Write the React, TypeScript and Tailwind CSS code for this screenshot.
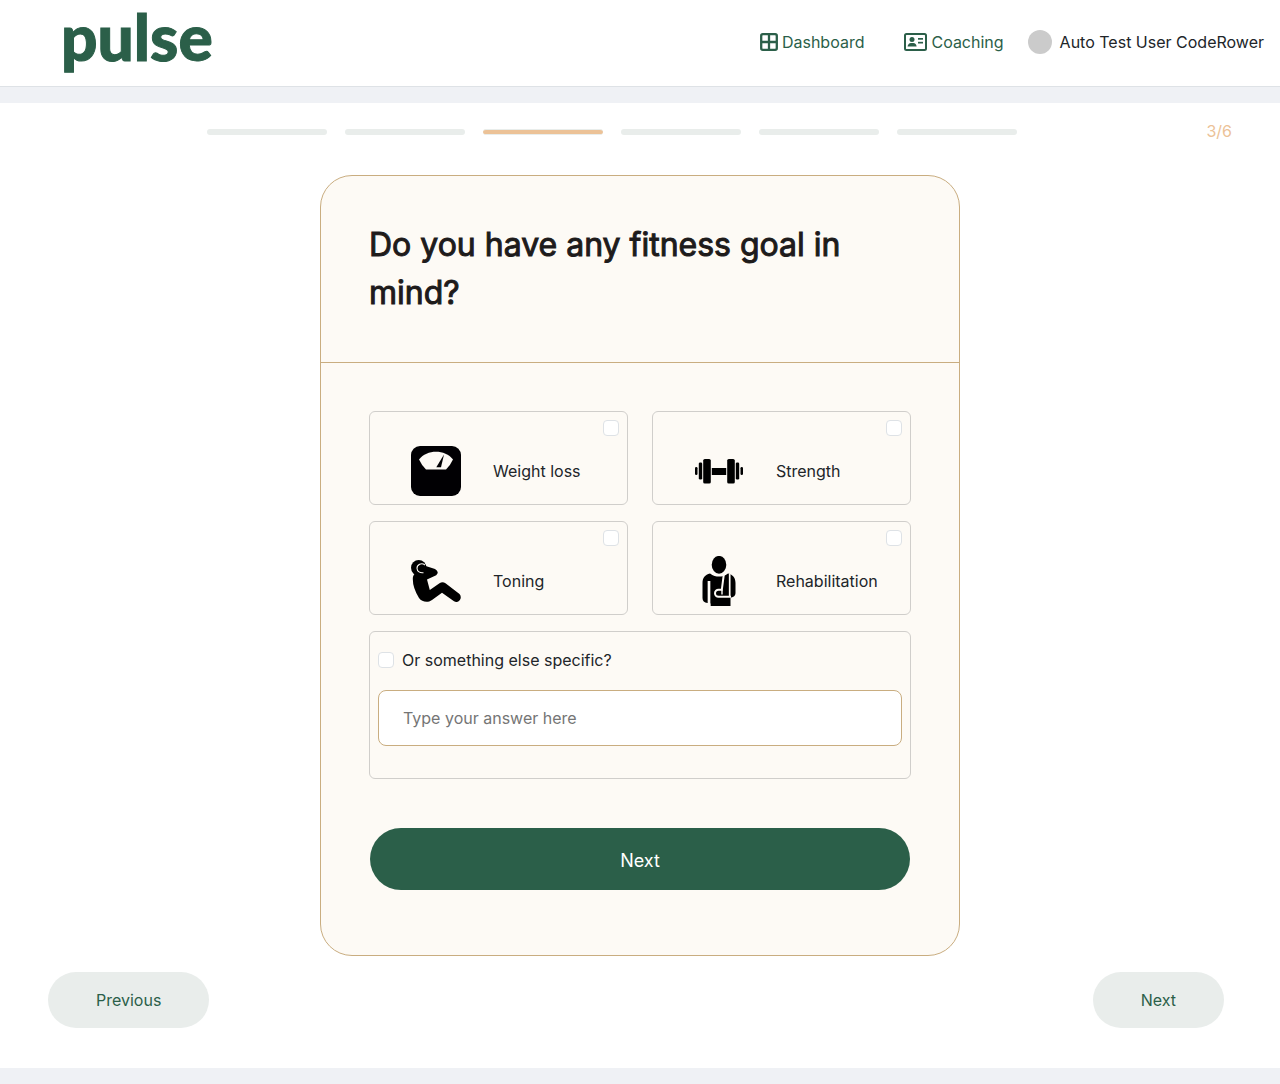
import { useState, type ReactNode } from "react";

const STEP_COUNT = 6;
const CURRENT_STEP = 3;

function DashboardIcon() {
  return (
    <svg viewBox="0 0 18 18" className="h-[18px] w-[18px]" fill="none" stroke="currentColor" strokeWidth="2.3" aria-hidden="true">
      <rect x="1.2" y="1.2" width="15.6" height="15.6" rx="1.6" />
      <path d="M9 1v16M1 9h16" />
    </svg>
  );
}

function CoachingIcon() {
  return (
    <svg viewBox="0 0 23 18" className="h-[18px] w-[23px]" fill="currentColor" aria-hidden="true">
      <rect x="1" y="1" width="21" height="16" rx="1.5" fill="none" stroke="currentColor" strokeWidth="2" />
      <circle cx="8" cy="6.6" r="2.5" />
      <path d="M3.6 13.6c0-2.2 1.8-3.7 3.2-3.7h2.6c1.6 0 3.2 1.5 3.2 3.7z" />
      <rect x="14" y="5" width="5" height="1.7" />
      <rect x="14" y="8.8" width="5" height="1.7" />
    </svg>
  );
}

function ScaleIcon() {
  return (
    <svg viewBox="0 0 50 50" className="size-[50px] shrink-0" aria-hidden="true">
      <rect width="50" height="50" rx="9" fill="#010003" />
      <path d="M8 13.5C16 3.2 34 3.2 42 13.5Q39.500 19 35 23.500H15Q10.500 19 8 13.500z" fill="#fdfaf5" />
      <path d="M33 8.500 25.300 21.200H30z" fill="#010003" />
    </svg>
  );
}

function DumbbellIcon() {
  return (
    <svg viewBox="0 0 50 50" className="size-[50px] shrink-0" fill="#000" aria-hidden="true">
      <rect x="1" y="21" width="2.500" height="8" rx="1.200" />
      <rect x="4.800" y="16.500" width="3.400" height="17" rx="1.300" />
      <rect x="9.200" y="13" width="7.600" height="24.500" rx="1.600" />
      <rect x="17.800" y="22" width="14.400" height="7" />
      <rect x="33.200" y="13" width="7.600" height="24.500" rx="1.600" />
      <rect x="41.800" y="16.500" width="3.400" height="17" rx="1.300" />
      <rect x="46.500" y="21" width="2.500" height="8" rx="1.200" />
    </svg>
  );
}

function SitUpIcon() {
  return (
    <svg viewBox="0 0 50 50" className="size-[50px] shrink-0" aria-hidden="true">
      <circle cx="7.700" cy="11.700" r="7.700" fill="#000" />
      <path
        d="M1.800 23C1.800 18 5 16 8 17L10 8.500L24 13Q28.800 16 25.200 19.300L16 23.500 18.800 34 28.500 27.200Q31.500 25.200 34.500 27.200L48.500 38C52 42 47.500 48 43 45.300L31 36.700 21 44C16.500 47.300 11 46 8 42Q1.800 32 1.800 23z"
        fill="#000"
      />
      <path d="M14 9C10.500 6.300 6 8.500 6 12.200C6.100 15.500 9 17.200 12.500 16.700" fill="none" stroke="#fdfaf5" strokeWidth="1.100" />
    </svg>
  );
}

function SlingIcon() {
  return (
    <svg viewBox="0 0 50 50" className="size-[50px] shrink-0" aria-hidden="true">
      <ellipse cx="25" cy="8.800" rx="7.300" ry="8.900" fill="#000" />
      <path
        d="M16 17.500C19 20 22 20.500 25 20.500S31 20 34 17.500C39 18.500 41.500 22 41.500 27V37C41.500 40 39 41.500 36.500 41.500V50H16.500V47.500L13.500 47Q8.500 46.500 8.500 42V27C8.500 22 11 18.500 16 17.500z"
        fill="#000"
      />
      <path d="M15 25V50" fill="none" stroke="#fdfaf5" strokeWidth="2.700" />
      <path d="M29.800 18.500 27.800 33.800H24.500a3.500 3.500 0 0 0 0 7H37" fill="none" stroke="#fdfaf5" strokeWidth="2" />
      <path d="M28 33.500V38.500" fill="none" stroke="#fdfaf5" strokeWidth="1.400" />
      <path d="M35.700 18V40" fill="none" stroke="#fdfaf5" strokeWidth="1.700" />
    </svg>
  );
}

const GOALS: { label: string; icon: ReactNode }[] = [
  { label: "Weight loss", icon: <ScaleIcon /> },
  { label: "Strength", icon: <DumbbellIcon /> },
  { label: "Toning", icon: <SitUpIcon /> },
  { label: "Rehabilitation", icon: <SlingIcon /> },
];

function Checkbox({ id }: { id: string }) {
  return (
    <input
      id={id}
      type="checkbox"
      className="size-4 shrink-0 appearance-none rounded-[4px] border border-[#dee2e6] bg-white checked:border-[#2b5f49] checked:bg-[#2b5f49]"
    />
  );
}

function GoalOption({ label, icon, id }: { label: string; icon: ReactNode; id: string }) {
  return (
    <label htmlFor={id} className="flex cursor-pointer flex-col gap-2.5 rounded-md border border-[#d0cecb] p-2">
      <span className="flex justify-end">
        <Checkbox id={id} />
      </span>
      <span className="flex items-center gap-8 pl-[33px]">
        {icon}
        {label}
      </span>
    </label>
  );
}

function Header() {
  return (
    <header className="flex h-[87px] items-center justify-between border-b border-[#dee2e6] bg-white pr-4 pl-[61px] text-[#2b5f49]">
      <a href="#home" className="pb-3 font-[Lato,sans-serif] text-[64px] leading-[72px] font-black [-webkit-text-stroke:1px_#2b5f49]">
        pulse
      </a>
      <nav className="flex items-center pb-0.5">
        <a href="#dashboard" className="flex items-center gap-1">
          <DashboardIcon />
          Dashboard
        </a>
        <a href="#coaching" className="ml-10 flex items-center gap-1">
          <CoachingIcon />
          Coaching
        </a>
        <a href="#profile" className="ml-6 flex items-center gap-2 text-[#212529]">
          <span className="size-6 rounded-full bg-[#cbcbcb]" />
          Auto Test User CodeRower
        </a>
      </nav>
    </header>
  );
}

function Progress() {
  return (
    <div className="flex items-center gap-[30px]">
      <ol className="flex flex-1 justify-center gap-[18px] pt-0.5">
        {Array.from({ length: STEP_COUNT }, (_, i) => (
          <li
            key={i}
            className={i + 1 === CURRENT_STEP ? "h-1.5 w-[120px] rounded-full border-y border-[#e9edeb] bg-[#ecc297]" : "h-1.5 w-[120px] rounded-full bg-[#e9edeb]"}
          />
        ))}
      </ol>
      <span className="text-[#ecc297]">
        {CURRENT_STEP}/{STEP_COUNT}
      </span>
    </div>
  );
}

export default function App() {
  const [answer, setAnswer] = useState("");

  return (
    <div className="min-h-screen bg-[#eff1f5] pb-4 font-[Inter,sans-serif] text-base text-[#212529]">
      <Header />
      <main className="mt-4 bg-white px-12 pt-4 pb-10">
        <Progress />
        <form className="mx-auto mt-8 max-w-[640px] rounded-[32px] border border-[#c9ad80] bg-[#fdfaf5]" onSubmit={(e) => e.preventDefault()}>
          <h1 className="border-b border-[#c9ad80] px-12 pt-[45px] pb-[45px] text-[32px] leading-[48px] font-normal text-[#1e1b1b] [-webkit-text-stroke:1px_#1e1b1b]">
            Do you have any fitness goal in mind?
          </h1>
          <div className="px-12 pt-12 pb-[65px]">
            <div className="grid grid-cols-2 gap-x-6 gap-y-4">
              {GOALS.map((goal, i) => (
                <GoalOption key={goal.label} id={`goal-${i}`} label={goal.label} icon={goal.icon} />
              ))}
              <div className="col-span-2 rounded-md border border-[#d0cecb] px-2 pt-4 pb-8">
                <label htmlFor="goal-other" className="flex items-center gap-2">
                  <Checkbox id="goal-other" />
                  Or something else specific?
                </label>
                <input
                  type="text"
                  aria-label="Your answer"
                  placeholder="Type your answer here"
                  value={answer}
                  onChange={(e) => setAnswer(e.target.value)}
                  className="mt-[18px] block h-14 w-full rounded-lg border border-[#c9ad80] bg-white px-6 placeholder:text-[#757575]"
                />
              </div>
            </div>
            <div className="mt-[49px] flex px-px">
              <button type="submit" className="h-[62px] w-full rounded-full bg-[#2b5f49] pt-1 text-lg text-white">
                Next
              </button>
            </div>
          </div>
        </form>
        <div className="mt-4 flex justify-between pr-2 text-[#2b5f49]">
          <button type="button" className="h-14 rounded-full bg-[#e9edeb] px-12">
            Previous
          </button>
          <button type="button" className="h-14 rounded-full bg-[#e9edeb] px-12">
            Next
          </button>
        </div>
      </main>
    </div>
  );
}
